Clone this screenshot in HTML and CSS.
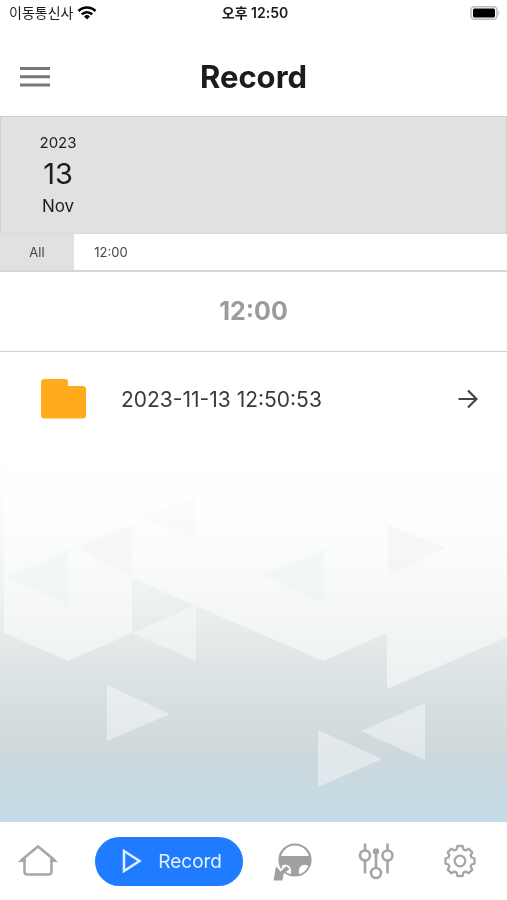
FILE: index.html
```html
<!DOCTYPE html>
<html lang="ko">
<head>
  <meta charset="UTF-8" />
  <meta name="viewport" content="width=device-width, initial-scale=1" />
  <title>Record</title>
  <link rel="stylesheet" href="styles.css">
</head>
<body>

  <div class="status-bar">
    <div class="carrier">
      <span>이동통신사</span>
      <svg width="20" height="14" viewBox="0 0 20 14" aria-hidden="true">
        <path d="M1.500 5a12 12 0 0 1 17 0M4.800 8.400a7.400 7.400 0 0 1 10.400 0" fill="none" stroke="#000" stroke-width="2.600" />
        <path d="M10 13.500l-3-3a4.300 4.300 0 0 1 6 0z" />
      </svg>
    </div>
    <div class="clock">오후 12:50</div>
    <svg class="battery" width="31" height="14" viewBox="0 0 31 14" aria-hidden="true">
      <rect x="1" y=".8" width="26" height="12.4" rx="3.5" fill="#fff" stroke="#b9b9b9" stroke-width="1.5" />
      <rect x="3" y="2.5" width="22" height="9" rx="1.5" />
      <path d="M28.5 4.5q2 2.5 0 5z" fill="#b9b9b9" />
    </svg>
  </div>

  <header>
    <button class="menu-btn" aria-label="Menu">
      <svg width="30" height="22" viewBox="0 0 30 22">
        <path d="M0 2.5h30M0 10.7h30M0 19h30" stroke="#777" stroke-width="3" />
      </svg>
    </button>
    <h1>Record</h1>
  </header>

  <div class="dates">
    <button class="date">
      <span class="year">2023</span>
      <span class="day">13</span>
      <span class="month">Nov</span>
    </button>
  </div>

  <div class="hours">
    <button class="hour active">All</button>
    <button class="hour">12:00</button>
  </div>

  <main>
    <svg class="backdrop" viewBox="0 0 507 390" preserveAspectRatio="xMidYMax slice" aria-hidden="true">
      <defs>
        <linearGradient id="sky" x1="0" y1="0" x2="0" y2="1">
          <stop offset="0" stop-color="#fff" />
          <stop offset=".2" stop-color="#fbfcfc" />
          <stop offset=".38" stop-color="#f1f4f4" />
          <stop offset=".54" stop-color="#e4e9e9" />
          <stop offset=".68" stop-color="#d8e0e1" />
          <stop offset=".84" stop-color="#cdd8dc" />
          <stop offset=".91" stop-color="#c8dae2" />
          <stop offset="1" stop-color="#c2dce8" />
        </linearGradient>
      </defs>
      <rect width="507" height="390" fill="url(#sky)" />
      <path d="M4 0V201L68 229L132 201V146L323 229L387 201V257L507 205V0z" fill="#fff" opacity=".5" />
      <g fill="#fff" opacity=".42">
        <path d="M132 201L196 173V229z" />
        <path d="M107 253L170 282L107 309z" />
        <path d="M425 271L361 299L425 328z" />
        <path d="M318 298L382 327L318 355z" />
      </g>
      <g fill="#dfe6e6" opacity=".22">
        <path d="M8 145L68 118V173z" />
        <path d="M262 143L324 118V172z" />
        <path d="M388 93V143L446 116z" opacity=".8" />
        <path d="M76 115L132 93V146z" opacity=".7" />
        <path d="M140 84L195 65V108z" opacity=".4" />
      </g>
    </svg>

    <h2>12:00</h2>

    <ul class="records">
      <li>
        <a href="#">
          <svg width="45" height="40" viewBox="0 0 45 40" aria-hidden="true">
            <path d="M3.5 0H24q3 0 3 3v4h14.500q3.500 0 3.500 3.500v26q0 3-3.500 3h-38q-3.500 0-3.500-3v-33q0-3.500 3.500-3.500z" fill="#ffab1c" />
          </svg>
          <span class="name">2023-11-13 12:50:53</span>
          <svg width="20" height="20" viewBox="0 0 20 20" aria-hidden="true">
            <path d="M.5 10H18M10 1.500L18.500 10L10 18.500" fill="none" stroke="#444" stroke-width="2.200" />
          </svg>
        </a>
      </li>
    </ul>
  </main>

  <nav>
    <a href="#" class="home" aria-label="Home">
      <svg width="42" height="34" viewBox="0 0 42 34">
        <path d="M7.500 15v12.500q0 3 3 3h21q3 0 3-3V15" fill="none" stroke="#a8a8a8" stroke-width="2.600" />
        <path d="M4 16.500L21 2.500L38 16.500" fill="none" stroke="#a8a8a8" stroke-width="2.600" />
        <path d="M.5 18h8v-5zM41.500 18h-8v-5z" fill="#a8a8a8" />
      </svg>
    </a>
    <a href="#" class="current">
      <svg width="20" height="24" viewBox="0 0 20 24" aria-hidden="true">
        <path d="M2 2L17.500 12L2 22z" fill="none" stroke="#e3f0ff" stroke-width="2.500" />
      </svg>
      <span>Record</span>
    </a>
    <a href="#" aria-label="Driving">
      <svg width="40" height="40" viewBox="0 0 40 40">
        <circle cx="22" cy="19" r="15.500" fill="none" stroke="#a0a0a0" stroke-width="2.200" />
        <path d="M6.500 15h31v4a15.500 15.500 0 0 1-31 0z" fill="#a0a0a0" />
        <path d="M8.500 25q5-3 8.500 1q2 3 1 7q-6-1-9.500-8zM35.500 25q-5-3-8.500 1q-2 3-1 7q6-1 9.500-8z" fill="#fff" />
        <path d="M.5 39.500L3 25.500L7.500 29.500L12.500 24.500L16.500 28L10.500 33L9.500 39.500z" fill="#a0a0a0" />
        <path d="M5.500 26l2 3.500l6-5.500" fill="none" stroke="#fff" stroke-width="1.500" />
      </svg>
    </a>
    <a href="#" aria-label="Settings">
      <svg width="36" height="38" viewBox="0 0 36 38">
        <g fill="none" stroke="#a6a6a6" stroke-width="2.600">
          <circle cx="7" cy="13.500" r="5" />
          <circle cx="29.500" cy="13.500" r="5" />
          <circle cx="18" cy="31" r="5" />
          <path d="M7 1.500v7M7 18.500v13M29.500 1.500v7M29.500 18.500v13M18 10v16" />
        </g>
        <circle cx="18" cy="9.500" r="3.200" fill="#a6a6a6" />
      </svg>
    </a>
    <a href="#" aria-label="System">
      <svg width="34" height="36" viewBox="-17 -18 34 36">
        <g fill="none" stroke="#a6a6a6" stroke-width="2.300" stroke-linejoin="round">
          <path d="M-2.600-15H2.600L3.500-11.500L5.600-10.600L8.600-12.300L12.300-8.600L10.600-5.600L11.500-3.500L14.500-2.600V2.600L11.500 3.500L10.600 5.600L12.300 8.600L8.600 12.300L5.600 10.600L3.500 11.500L2.600 15H-2.600L-3.500 11.500L-5.600 10.600L-8.600 12.300L-12.300 8.600L-10.600 5.600L-11.500 3.500L-14.500 2.600V-2.600L-11.500-3.500L-10.600-5.600L-12.300-8.600L-8.600-12.300L-5.600-10.600L-3.500-11.500z" />
          <circle r="5.300" />
        </g>
      </svg>
    </a>
  </nav>

</body>
</html>
```
FILE: styles.css
```css
* {
  box-sizing: border-box;
}

body {
  display: flex;
  flex-direction: column;
  min-height: 100vh;
  margin: 0;
  background-color: #fff;
  color: #1c1c1c;
  font-family: Inter, "Noto Sans CJK KR", sans-serif;
}

button {
  border: none;
  padding: 0;
  background: none;
  color: inherit;
  font-family: inherit;
  cursor: pointer;
}

a {
  color: inherit;
  text-decoration: none;
}

svg {
  display: block;
  flex-shrink: 0;
}

.status-bar {
  display: grid;
  grid-template-columns: 1fr auto 1fr;
  align-items: center;
  height: 26px;
  padding: 0 6px 0 9px;
  font-size: 14px;
  line-height: 20px;
}

.carrier {
  display: flex;
  align-items: center;
  gap: 4px;
}

.clock {
  font-weight: 600;
}

.battery {
  justify-self: end;
}

header {
  display: grid;
  grid-template-columns: 1fr auto 1fr;
  align-items: center;
  height: 90px;
  padding: 12px 20px 0;
}

.menu-btn {
  justify-self: start;
}

h1 {
  margin: 0;
  font-size: 31px;
  font-weight: 700;
  line-height: 40px;
}

/* Seletor de data */
.dates {
  display: flex;
  padding: 12px 20px;
  background-color: #e1e1e1;
  border: 1px solid #cfcfcf;
  border-bottom-color: #dadada;
}

.date {
  display: flex;
  flex-direction: column;
  align-items: center;
  width: 74px;
}

.year {
  font-size: 15px;
  line-height: 28px;
}

.day {
  font-size: 29px;
  line-height: 34px;
}

.month {
  font-size: 17px;
  line-height: 30px;
}

.hours {
  display: flex;
  border-bottom: 2px solid #d6d6d6;
}

.hour {
  width: 74px;
  height: 36px;
  font-size: 13px;
  color: #444;
}

.hour.active {
  background-color: #e1e1e1;
}

main {
  position: relative;
  flex: 1;
}

/* Fundo decorativo atrás da lista */
.backdrop {
  position: absolute;
  bottom: 0;
  left: 0;
  z-index: -1;
  width: 100%;
  height: 390px;
}

h2 {
  margin: 0;
  padding: 23px 24px 24px;
  border-bottom: 1px solid #d2d2d2;
  color: #9b9b9b;
  font-size: 25px;
  font-weight: 700;
  line-height: 32px;
  text-align: center;
}

.records {
  margin: 0;
  padding: 0;
  list-style: none;
}

.records a {
  display: flex;
  align-items: center;
  gap: 35px;
  padding: 27px 29px 26px 41px;
}

.name {
  flex: 1;
  color: #3a3a3a;
  font-size: 21px;
}

nav {
  display: grid;
  grid-template-columns: 1fr 2fr 1fr 1fr 1fr;
  align-items: center;
  justify-items: center;
  height: 78px;
  padding-right: 5px;
  background-color: #fff;
}

nav .home {
  justify-self: start;
  margin-left: 17px;
}

nav .current {
  display: flex;
  align-items: center;
  justify-self: end;
  gap: 16px;
  height: 49px;
  margin-right: 8px;
  padding: 0 21px 0 27px;
  border-radius: 25px;
  background-color: #1f7bff;
  color: #e3f0ff;
  font-size: 19px;
}
```
